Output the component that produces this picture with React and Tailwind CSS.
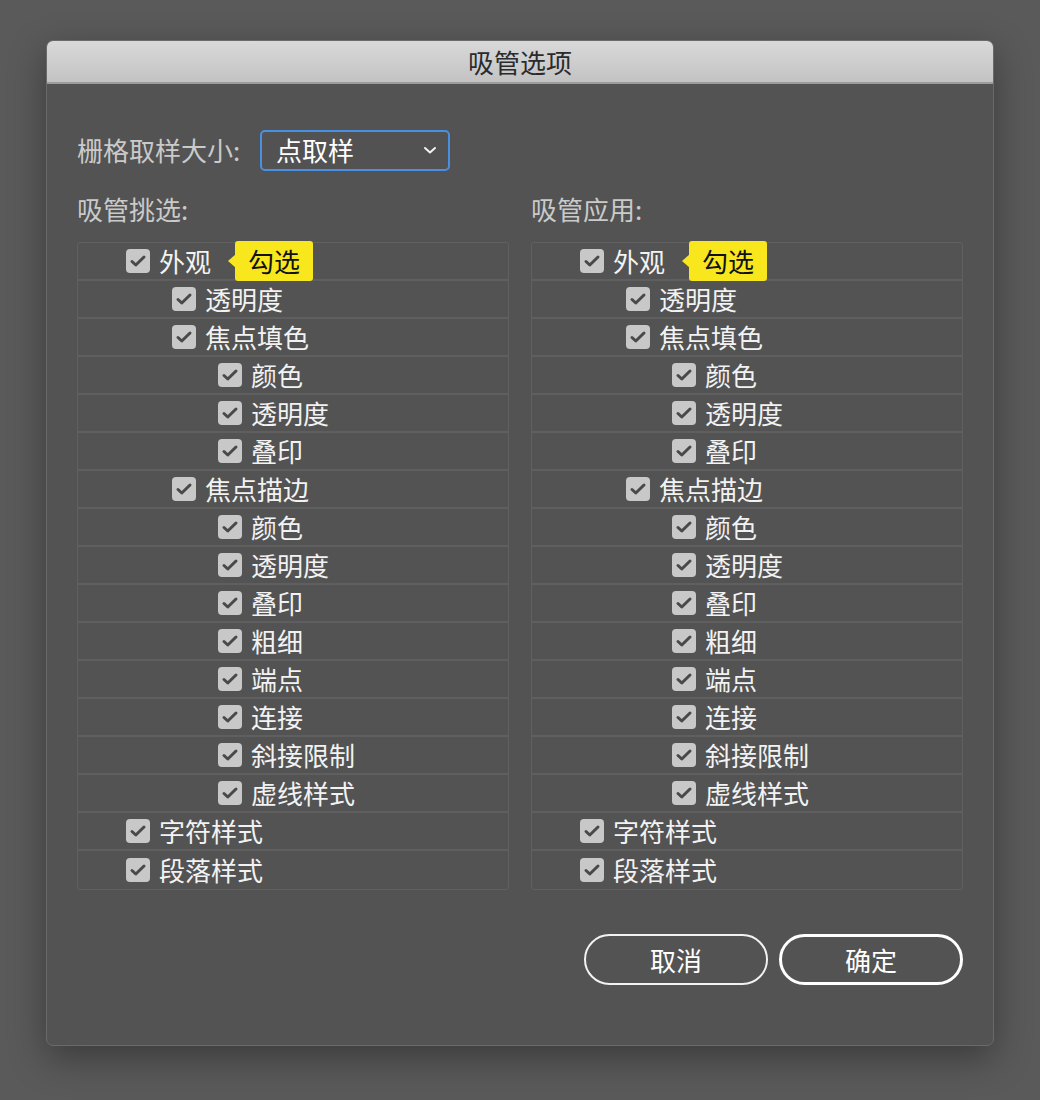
import React from "react";

const rows = [
  [0, "外观", true],
  [1, "透明度"],
  [1, "焦点填色"],
  [2, "颜色"],
  [2, "透明度"],
  [2, "叠印"],
  [1, "焦点描边"],
  [2, "颜色"],
  [2, "透明度"],
  [2, "叠印"],
  [2, "粗细"],
  [2, "端点"],
  [2, "连接"],
  [2, "斜接限制"],
  [2, "虚线样式"],
  [0, "字符样式"],
  [0, "段落样式"],
];

const pad = ["pl-[48px]", "pl-[94px]", "pl-[140px]"];

function Check() {
  return (
    <div className="w-[24px] h-[24px] rounded-[4px] bg-[#c8c8c8] shrink-0">
      <svg width="24" height="24" viewBox="0 0 24 24">
        <path d="M6 12.5 L9.8 16 L18 8" fill="none" stroke="#494949" strokeWidth="3" strokeLinecap="round" strokeLinejoin="round" />
      </svg>
    </div>
  );
}

function Panel() {
  return (
    <div className="w-[432px] border border-[#606060] rounded-[3px]">
      {rows.map(([lvl, label, tip], i) => (
        <div
          key={i}
          className={`h-[38px] flex items-center ${pad[lvl]} ${i < rows.length - 1 ? "border-b-2 border-[#5f5f5f]" : ""}`}
        >
          <Check />
          <span className="ml-[9px] text-[26px] leading-none text-[#f2f2f2]">{label}</span>
          {tip && (
            <div className="relative ml-[24px] h-[40px] px-[13px] bg-[#f8e71c] rounded-[3px] flex items-center">
              <div className="absolute left-[-7px] top-1/2 -translate-y-1/2 w-0 h-0 border-y-[7px] border-y-transparent border-r-[8px] border-r-[#f8e71c]" />
              <span className="text-[26px] leading-none text-[#111]">勾选</span>
            </div>
          )}
        </div>
      ))}
    </div>
  );
}

export default function App() {
  return (
    <div
      className="w-[1040px] h-[1100px] bg-[#5a5a5a] pt-[40px] pl-[46px]"
      style={{ fontFamily: '"Noto Sans CJK SC", "Noto Sans", sans-serif' }}
    >
      <div className="w-[948px] h-[1006px] rounded-[7px] bg-[#535353] border border-[#6a6a6a] shadow-[0_12px_36px_rgba(0,0,0,0.35)] flex flex-col overflow-hidden">
        <div className="h-[43px] shrink-0 bg-gradient-to-b from-[#d9d9d9] to-[#c3c3c3] border-b-2 border-[#9c9c9c] flex items-center justify-center">
          <span className="text-[26px] leading-none text-[#2b2b2b]">吸管选项</span>
        </div>
        <div className="flex-1 pl-[30px] pr-[30px] pt-[45px]">
          <div className="flex items-center h-[42px]">
            <span className="w-[183px] shrink-0 text-[26px] leading-none text-[#cacaca]">栅格取样大小:</span>
            <div className="w-[190px] h-[41px] rounded-[5px] border-2 border-[#4a90e2] bg-[#525252] flex items-center justify-between pl-[14px] pr-[11px]">
              <span className="text-[26px] leading-none text-white">点取样</span>
              <svg width="14" height="10" viewBox="0 0 14 10">
                <path d="M2 3 L7 7.5 L12 3" fill="none" stroke="#f2f2f2" strokeWidth="2" strokeLinecap="round" strokeLinejoin="round" />
              </svg>
            </div>
          </div>
          <div className="flex gap-[22px] mt-[18px]">
            <div className="flex flex-col">
              <div className="h-[40px] flex items-center text-[26px] leading-none text-[#cacaca]">吸管挑选:</div>
              <div className="mt-[13px]"><Panel /></div>
            </div>
            <div className="flex flex-col">
              <div className="h-[40px] flex items-center text-[26px] leading-none text-[#cacaca]">吸管应用:</div>
              <div className="mt-[13px]"><Panel /></div>
            </div>
          </div>
          <div className="flex justify-end gap-[11px] mt-[44px]">
            <button className="w-[184px] h-[51px] rounded-full border-2 border-[#f2f2f2] text-[26px] leading-none text-white flex items-center justify-center">取消</button>
            <button className="w-[184px] h-[51px] rounded-full border-[3px] border-white text-[26px] leading-none text-white flex items-center justify-center">确定</button>
          </div>
        </div>
      </div>
    </div>
  );
}
